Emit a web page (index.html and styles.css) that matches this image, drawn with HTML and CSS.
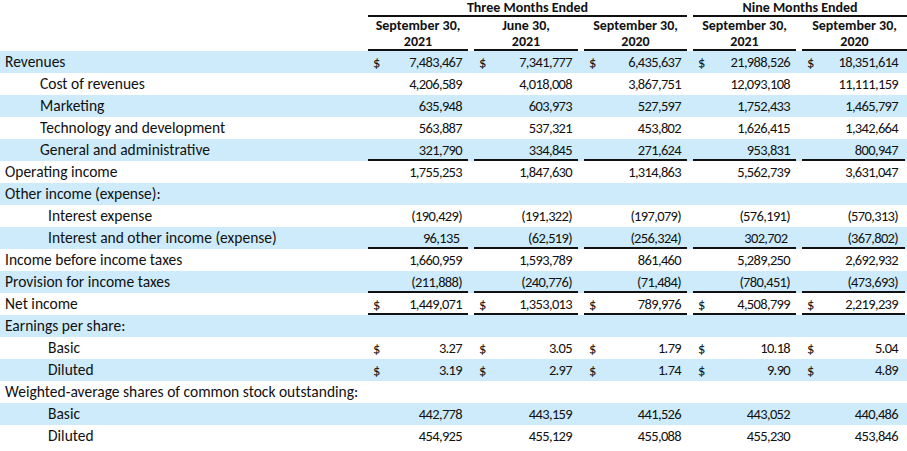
FILE: index.html
```html
<!DOCTYPE html>
<html lang="en">
<head>
<meta charset="utf-8">
<title>Statement of Operations</title>
<link rel="stylesheet" href="styles.css">
</head>
<body>
<table class="stmt">
  <colgroup>
    <col class="c-label"><col class="c1"><col class="c2"><col class="c3"><col class="c4"><col class="c5">
  </colgroup>
  <thead>
    <tr class="h1">
      <th></th>
      <th colspan="3"><div class="span-head">Three Months Ended</div></th>
      <th colspan="2"><div class="span-head last">Nine Months Ended</div></th>
    </tr>
    <tr class="h2">
      <th></th>
      <th><div class="col-head">September 30,<br>2021</div></th>
      <th><div class="col-head">June 30,<br>2021</div></th>
      <th><div class="col-head">September 30,<br>2020</div></th>
      <th><div class="col-head">September 30,<br>2021</div></th>
      <th><div class="col-head last">September 30,<br>2020</div></th>
    </tr>
  </thead>
  <tbody>
    <tr class="blue">
      <td class="lbl">Revenues</td>
      <td><div class="v"><span>$</span><span>7,483,467</span></div></td>
      <td><div class="v"><span>$</span><span>7,341,777</span></div></td>
      <td><div class="v"><span>$</span><span>6,435,637</span></div></td>
      <td><div class="v"><span>$</span><span>21,988,526</span></div></td>
      <td><div class="v last"><span>$</span><span>18,351,614</span></div></td>
    </tr>
    <tr>
      <td class="lbl in1">Cost of revenues</td>
      <td><div class="v"><span></span><span>4,206,589</span></div></td>
      <td><div class="v"><span></span><span>4,018,008</span></div></td>
      <td><div class="v"><span></span><span>3,867,751</span></div></td>
      <td><div class="v"><span></span><span>12,093,108</span></div></td>
      <td><div class="v last"><span></span><span>11,111,159</span></div></td>
    </tr>
    <tr class="blue">
      <td class="lbl in1">Marketing</td>
      <td><div class="v"><span></span><span>635,948</span></div></td>
      <td><div class="v"><span></span><span>603,973</span></div></td>
      <td><div class="v"><span></span><span>527,597</span></div></td>
      <td><div class="v"><span></span><span>1,752,433</span></div></td>
      <td><div class="v last"><span></span><span>1,465,797</span></div></td>
    </tr>
    <tr>
      <td class="lbl in1">Technology and development</td>
      <td><div class="v"><span></span><span>563,887</span></div></td>
      <td><div class="v"><span></span><span>537,321</span></div></td>
      <td><div class="v"><span></span><span>453,802</span></div></td>
      <td><div class="v"><span></span><span>1,626,415</span></div></td>
      <td><div class="v last"><span></span><span>1,342,664</span></div></td>
    </tr>
    <tr class="blue rule">
      <td class="lbl in1">General and administrative</td>
      <td><div class="v"><span></span><span>321,790</span></div></td>
      <td><div class="v"><span></span><span>334,845</span></div></td>
      <td><div class="v"><span></span><span>271,624</span></div></td>
      <td><div class="v"><span></span><span>953,831</span></div></td>
      <td><div class="v last"><span></span><span>800,947</span></div></td>
    </tr>
    <tr>
      <td class="lbl">Operating income</td>
      <td><div class="v"><span></span><span>1,755,253</span></div></td>
      <td><div class="v"><span></span><span>1,847,630</span></div></td>
      <td><div class="v"><span></span><span>1,314,863</span></div></td>
      <td><div class="v"><span></span><span>5,562,739</span></div></td>
      <td><div class="v last"><span></span><span>3,631,047</span></div></td>
    </tr>
    <tr class="blue">
      <td class="lbl">Other income (expense):</td>
      <td></td><td></td><td></td><td></td><td></td>
    </tr>
    <tr>
      <td class="lbl in2">Interest expense</td>
      <td><div class="v"><span></span><span>(190,429)</span></div></td>
      <td><div class="v"><span></span><span>(191,322)</span></div></td>
      <td><div class="v"><span></span><span>(197,079)</span></div></td>
      <td><div class="v"><span></span><span>(576,191)</span></div></td>
      <td><div class="v last"><span></span><span>(570,313)</span></div></td>
    </tr>
    <tr class="blue rule">
      <td class="lbl in2">Interest and other income (expense)</td>
      <td><div class="v"><span></span><span>96,135&nbsp;</span></div></td>
      <td><div class="v"><span></span><span>(62,519)</span></div></td>
      <td><div class="v"><span></span><span>(256,324)</span></div></td>
      <td><div class="v"><span></span><span>302,702&nbsp;</span></div></td>
      <td><div class="v last"><span></span><span>(367,802)</span></div></td>
    </tr>
    <tr>
      <td class="lbl">Income before income taxes</td>
      <td><div class="v"><span></span><span>1,660,959</span></div></td>
      <td><div class="v"><span></span><span>1,593,789</span></div></td>
      <td><div class="v"><span></span><span>861,460</span></div></td>
      <td><div class="v"><span></span><span>5,289,250</span></div></td>
      <td><div class="v last"><span></span><span>2,692,932</span></div></td>
    </tr>
    <tr class="blue rule">
      <td class="lbl">Provision for income taxes</td>
      <td><div class="v"><span></span><span>(211,888)</span></div></td>
      <td><div class="v"><span></span><span>(240,776)</span></div></td>
      <td><div class="v"><span></span><span>(71,484)</span></div></td>
      <td><div class="v"><span></span><span>(780,451)</span></div></td>
      <td><div class="v last"><span></span><span>(473,693)</span></div></td>
    </tr>
    <tr class="dbl">
      <td class="lbl">Net income</td>
      <td><div class="v"><span>$</span><span>1,449,071</span></div></td>
      <td><div class="v"><span>$</span><span>1,353,013</span></div></td>
      <td><div class="v"><span>$</span><span>789,976</span></div></td>
      <td><div class="v"><span>$</span><span>4,508,799</span></div></td>
      <td><div class="v last"><span>$</span><span>2,219,239</span></div></td>
    </tr>
    <tr class="blue">
      <td class="lbl">Earnings per share:</td>
      <td></td><td></td><td></td><td></td><td></td>
    </tr>
    <tr>
      <td class="lbl in2">Basic</td>
      <td><div class="v"><span>$</span><span>3.27</span></div></td>
      <td><div class="v"><span>$</span><span>3.05</span></div></td>
      <td><div class="v"><span>$</span><span>1.79</span></div></td>
      <td><div class="v"><span>$</span><span>10.18</span></div></td>
      <td><div class="v last"><span>$</span><span>5.04</span></div></td>
    </tr>
    <tr class="blue">
      <td class="lbl in2">Diluted</td>
      <td><div class="v"><span>$</span><span>3.19</span></div></td>
      <td><div class="v"><span>$</span><span>2.97</span></div></td>
      <td><div class="v"><span>$</span><span>1.74</span></div></td>
      <td><div class="v"><span>$</span><span>9.90</span></div></td>
      <td><div class="v last"><span>$</span><span>4.89</span></div></td>
    </tr>
    <tr>
      <td class="lbl">Weighted-average shares of common stock outstanding:</td>
      <td></td><td></td><td></td><td></td><td></td>
    </tr>
    <tr class="blue">
      <td class="lbl in2">Basic</td>
      <td><div class="v"><span></span><span>442,778</span></div></td>
      <td><div class="v"><span></span><span>443,159</span></div></td>
      <td><div class="v"><span></span><span>441,526</span></div></td>
      <td><div class="v"><span></span><span>443,052</span></div></td>
      <td><div class="v last"><span></span><span>440,486</span></div></td>
    </tr>
    <tr>
      <td class="lbl in2">Diluted</td>
      <td><div class="v"><span></span><span>454,925</span></div></td>
      <td><div class="v"><span></span><span>455,129</span></div></td>
      <td><div class="v"><span></span><span>455,088</span></div></td>
      <td><div class="v"><span></span><span>455,230</span></div></td>
      <td><div class="v last"><span></span><span>453,846</span></div></td>
    </tr>
  </tbody>
</table>
</body>
</html>
```

FILE: styles.css
```css
html, body {
  margin: 0;
  padding: 0;
  background: #ffffff;
}

body {
  font-family: Carlito, Lato, "Liberation Sans", sans-serif;
  font-size: 14.5px;
  color: #111111;
}

.stmt {
  border-collapse: collapse;
  table-layout: fixed;
  width: 907px;
}

.c-label { width: 368px; }
.c1 { width: 106px; }
.c2 { width: 110px; }
.c3 { width: 109px; }
.c4 { width: 109px; }
.c5 { width: 105px; }

.stmt th,
.stmt td {
  padding: 0;
  font-weight: normal;
  vertical-align: bottom;
}

.stmt th {
  font-weight: bold;
  text-align: center;
  font-size: 14px;
}

.span-head {
  height: 17px;
  line-height: 16px;
  margin-right: 6px;
  border-bottom: 2px solid #111111;
  box-sizing: border-box;
}

.span-head.last {
  margin-right: 0;
}

.h2 th {
  padding-top: 1px;
}

.col-head {
  height: 33px;
  line-height: 15.5px;
  padding-top: 0;
  margin-right: 6px;
  border-bottom: 2px solid #111111;
  box-sizing: border-box;
}

.col-head.last {
  margin-right: 0;
}

.stmt tbody tr {
  height: 22px;
}

.stmt tbody tr.blue {
  background: #cdebfb;
}

.lbl {
  padding-left: 5px !important;
  line-height: 22px;
  font-size: 15.5px;
  white-space: nowrap;
}

.lbl.in1 {
  padding-left: 40px !important;
}

.lbl.in2 {
  padding-left: 48px !important;
}

.v {
  height: 22px;
  box-sizing: border-box;
  margin-right: 6px;
  padding: 0 6px 0 5px;
  display: flex;
  align-items: center;
  justify-content: space-between;
  white-space: nowrap;
  font-size: 14.5px;
  letter-spacing: -0.65px;
}

.v.last {
  margin-right: 2px;
  padding-right: 7px;
}

.rule .v {
  box-shadow: inset 0 -2px 0 #111111;
}

.dbl .v {
  border-bottom: 5px double #111111;
  height: 25px;
  margin-bottom: -3px;
  padding-top: 1px;
}
```
